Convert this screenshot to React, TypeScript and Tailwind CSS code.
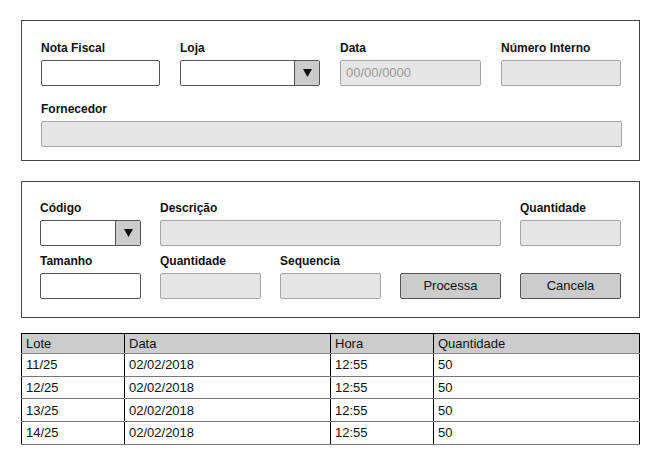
const labelCls = "block text-[12px] leading-[15px] font-bold text-[#111]"

function Label({ children }: { children: React.ReactNode }) {
  return <span className={labelCls}>{children}</span>
}

function TextBox({ disabled, placeholder, className = "" }: { disabled?: boolean; placeholder?: string; className?: string }) {
  return (
    <div
      className={`h-[26px] rounded-[2px] border-[1.5px] flex items-center px-[5px] text-[13px] ${
        disabled ? "bg-[#e6e6e6] border-[#a6a6a6] text-[#9a9a9a]" : "bg-white border-[#555]"
      } ${className}`}
    >
      {placeholder}
    </div>
  )
}

function Select({ className = "" }: { className?: string }) {
  return (
    <div className={`h-[26px] rounded-[2px] border-[1.5px] border-[#555] bg-white flex ${className}`}>
      <div className="flex-1" />
      <div className="w-[25px] border-l-[1.5px] border-[#555] bg-[#cccccc] flex items-center justify-center">
        <svg width="9" height="8" viewBox="0 0 9 8">
          <path d="M0 0 H9 L4.5 8 Z" fill="#111" />
        </svg>
      </div>
    </div>
  )
}

function Field({ label, children, className = "" }: { label: string; children: React.ReactNode; className?: string }) {
  return (
    <div className={`flex flex-col gap-[4px] ${className}`}>
      <Label>{label}</Label>
      {children}
    </div>
  )
}

const rows = [
  ["11/25", "02/02/2018", "12:55", "50"],
  ["12/25", "02/02/2018", "12:55", "50"],
  ["13/25", "02/02/2018", "12:55", "50"],
  ["14/25", "02/02/2018", "12:55", "50"],
]

export default function App() {
  return (
    <div className="w-[660px] h-[463px] bg-white pt-[20px] pl-[21px] font-['Liberation_Sans',Arial,sans-serif] text-[#111]">
      {/* cabeçalho da nota */}
      <div className="w-[619px] h-[141px] border-[1.5px] border-[#444] pt-[20px] pl-[19px] flex flex-col gap-[16px]">
        <div className="flex gap-[20px]">
          <Field label="Nota Fiscal" className="w-[119px]">
            <TextBox />
          </Field>
          <Field label="Loja" className="w-[140px]">
            <Select />
          </Field>
          <Field label="Data" className="w-[141px]">
            <TextBox disabled placeholder="00/00/0000" />
          </Field>
          <Field label="Número Interno" className="w-[120px]">
            <TextBox disabled />
          </Field>
        </div>
        <Field label="Fornecedor" className="w-[581px]">
          <TextBox disabled />
        </Field>
      </div>

      {/* itens */}
      <div className="mt-[20px] w-[619px] h-[137px] border-[1.5px] border-[#444] pt-[19px] pl-[18px] grid grid-cols-[101px_101px_101px_101px_101px] gap-x-[19px] gap-y-[8px] content-start">
        <Field label="Código">
          <Select />
        </Field>
        <Field label="Descrição" className="col-span-3">
          <TextBox disabled />
        </Field>
        <Field label="Quantidade">
          <TextBox disabled />
        </Field>
        <Field label="Tamanho">
          <TextBox />
        </Field>
        <Field label="Quantidade">
          <TextBox disabled />
        </Field>
        <Field label="Sequencia">
          <TextBox disabled />
        </Field>
        <div className="flex flex-col justify-end">
          <button className="h-[26px] rounded-[2px] border-[1.5px] border-[#555] bg-[#cccccc] text-[13px]">Processa</button>
        </div>
        <div className="flex flex-col justify-end">
          <button className="h-[26px] rounded-[2px] border-[1.5px] border-[#555] bg-[#cccccc] text-[13px]">Cancela</button>
        </div>
      </div>

      {/* lotes */}
      <table className="mt-[15px] w-[618px] border-collapse border border-black text-[13px] table-fixed">
        <colgroup>
          <col className="w-[103px]" />
          <col className="w-[206px]" />
          <col className="w-[103px]" />
          <col className="w-[206px]" />
        </colgroup>
        <thead>
          <tr className="h-[20px] bg-[#cccccc]">
            {["Lote", "Data", "Hora", "Quantidade"].map((h) => (
              <th key={h} className="text-left font-normal leading-[15px] px-[4px] border-l border-black border-b border-b-[#888]">
                {h}
              </th>
            ))}
          </tr>
        </thead>
        <tbody>
          {rows.map((r, i) => (
            <tr key={i} className="h-[22.7px]">
              {r.map((c, j) => (
                <td key={j} className="px-[4px] leading-[15px] border-l border-black border-b border-b-[#777]">
                  {c}
                </td>
              ))}
            </tr>
          ))}
        </tbody>
      </table>
    </div>
  )
}
